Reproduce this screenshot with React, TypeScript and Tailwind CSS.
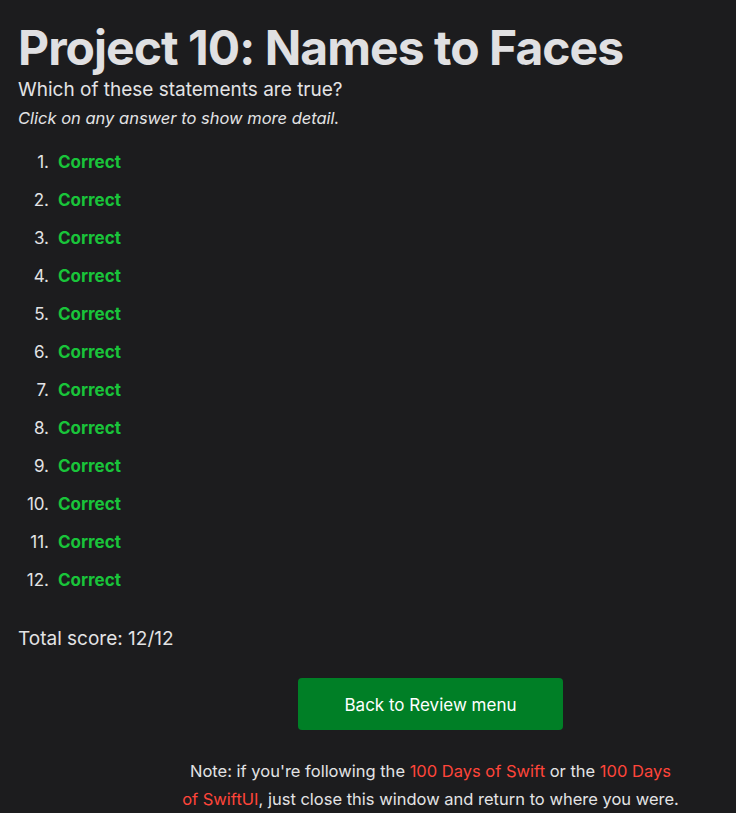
const answers = Array.from({ length: 12 }, (_, i) => i + 1);

export default function App() {
  return (
    <main
      className="min-h-[813px] bg-[#1c1c1e] text-[#e3e3e5] pt-[20px]"
      style={{ fontFamily: 'Inter, "Noto Sans", sans-serif' }}
    >
      <div className="px-[18px]">
        <h1 className="text-[48px] leading-[56px] font-bold tracking-[-0.02em] text-[#e0e0e2]">
          Project 10: Names to Faces
        </h1>
        <p className="mt-[2px] text-[19px] leading-[24px]">
          Which of these statements are true?
        </p>
        <p className="mt-[4px] text-[16.5px] leading-[24px] italic">
          Click on any answer to show more detail.
        </p>

        {/* Answers */}
        <ol className="mt-[14px]">
          {answers.map((n) => (
            <li key={n} className="flex h-[38px] items-center text-[17px]">
              <span className="w-[31px] text-right">{n}.</span>
              <span className="ml-[9px] font-bold text-[#19c43a]">Correct</span>
            </li>
          ))}
        </ol>

        <p className="mt-[27px] text-[19px] leading-[24px]">Total score: 12/12</p>
      </div>

      <div className="pl-[125px] text-center">
        <button className="mt-[27px] h-[52px] w-[265px] rounded-[4px] bg-[#007f26] pt-[3px] text-[17px] text-white">
          Back to Review menu
        </button>
        <p className="mx-auto mt-[27px] w-[497px] text-[16.5px] leading-[28px]">
          Note: if you're following the{' '}
          <a className="text-[#ff453a]">100 Days of Swift</a> or the{' '}
          <a className="text-[#ff453a]">100 Days of SwiftUI</a>, just close this
          window and return to where you were.
        </p>
      </div>
    </main>
  );
}
